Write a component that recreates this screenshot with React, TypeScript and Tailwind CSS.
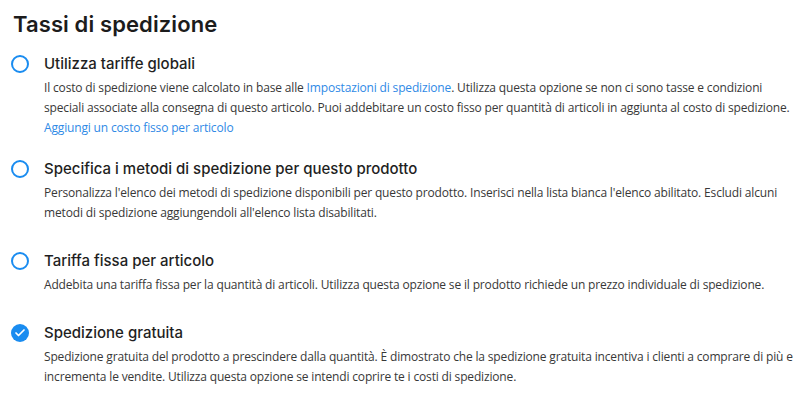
import { Check } from "lucide-react";

interface ShippingOption {
    title: string;
    selected?: boolean;
    body: React.ReactNode;
}

const options: ShippingOption[] = [
    {
        title: "Utilizza tariffe globali",
        body: (
            <>
                <p>
                    Il costo di spedizione viene calcolato in base alle{" "}
                    <a className="text-[#2f8ae6]">Impostazioni di spedizione</a>. Utilizza questa opzione se non ci sono tasse e
                    condizioni speciali associate alla consegna di questo articolo. Puoi addebitare un costo fisso per quantità di
                    articoli in aggiunta al costo di spedizione.
                </p>
                {/* link line sits a little tighter against the next option */}
                <a className="block -mb-[7px] text-[#2f8ae6]">Aggiungi un costo fisso per articolo</a>
            </>
        ),
    },
    {
        title: "Specifica i metodi di spedizione per questo prodotto",
        body: (
            <p>
                Personalizza l'elenco dei metodi di spedizione disponibili per questo prodotto. Inserisci nella lista bianca
                l'elenco abilitato. Escludi alcuni metodi di spedizione aggiungendoli all'elenco lista disabilitati.
            </p>
        ),
    },
    {
        title: "Tariffa fissa per articolo",
        body: (
            <p>
                Addebita una tariffa fissa per la quantità di articoli. Utilizza questa opzione se il prodotto richiede un prezzo
                individuale di spedizione.
            </p>
        ),
    },
    {
        title: "Spedizione gratuita",
        selected: true,
        body: (
            <p>
                Spedizione gratuita del prodotto a prescindere dalla quantità. È dimostrato che la spedizione gratuita incentiva i
                clienti a comprare di più e incrementa le vendite. Utilizza questa opzione se intendi coprire te i costi di
                spedizione.
            </p>
        ),
    },
];

const Radio = ({ selected }: { selected?: boolean }) => {
    if (selected) {
        return (
            <div className="w-[18px] h-[18px] rounded-full bg-[#1a8cf0] flex items-center justify-center">
                <Check className="w-3 h-3 text-white" strokeWidth={3.5} />
            </div>
        );
    }
    return <div className="w-[18px] h-[18px] rounded-full border-2 border-[#1a8cf0]" />;
};

const App = () => {
    return (
        <div className="w-[803px] h-[405px] bg-white overflow-hidden pl-[13px] pr-[5px] pt-[8px] font-['Open_Sans',sans-serif]">
            <h1 className="text-[22px] leading-[32px] font-semibold text-[#1c1c1c] font-['Inter',sans-serif] tracking-[0.1px]">
                Tassi di spedizione
            </h1>
            <div className="mt-[12px] flex flex-col gap-[26px]">
                {options.map((opt) => (
                    <div key={opt.title} className="flex gap-[15px]">
                        <div className="pt-[3px] -ml-[2px]">
                            <Radio selected={opt.selected} />
                        </div>
                        <div className="flex-1">
                            <div className="text-[15px] leading-[24px] font-medium text-[#1f1f1f] font-['Inter',sans-serif]">
                                {opt.title}
                            </div>
                            <div className="mt-[2px] text-[12px] leading-[20px] tracking-[-0.16px] text-[#383838]">
                                {opt.body}
                            </div>
                        </div>
                    </div>
                ))}
            </div>
        </div>
    );
};

export default App;
